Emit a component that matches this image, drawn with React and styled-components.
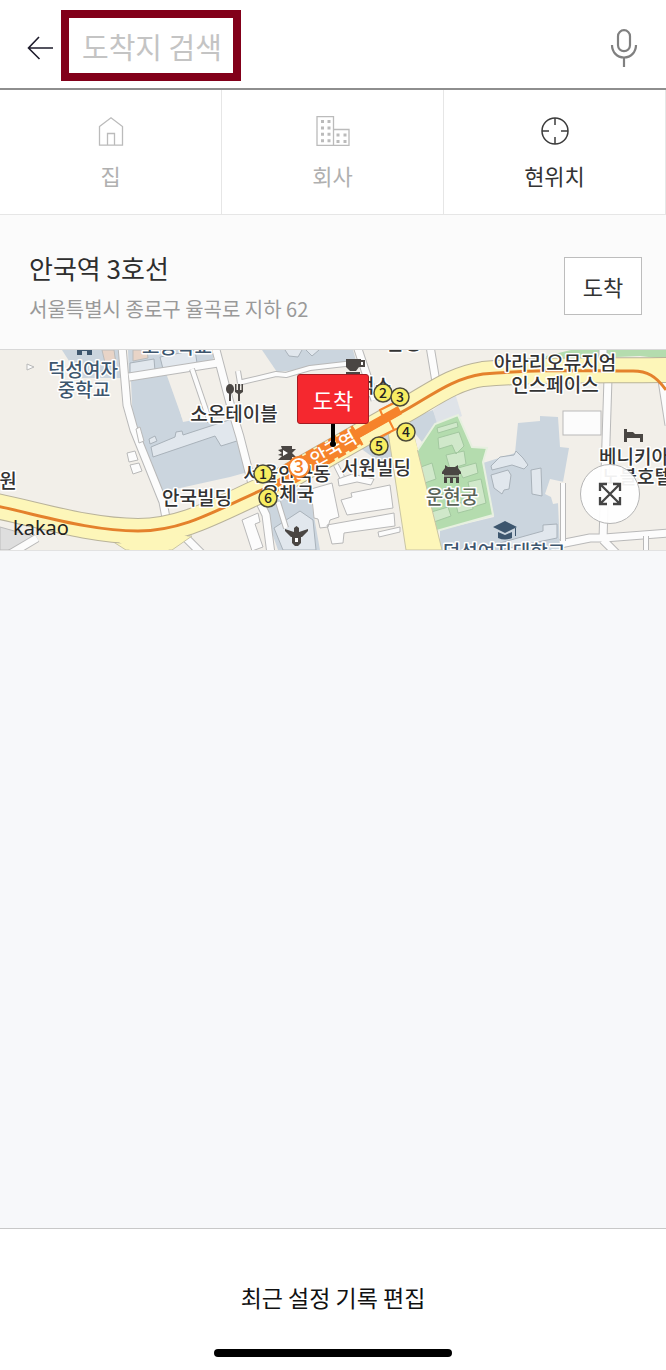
import React from "react";
import styled, { createGlobalStyle, css } from "styled-components";

const GlobalStyle = createGlobalStyle`
  * {
    box-sizing: border-box;
  }

  html,
  body,
  #root {
    height: 100%;
  }

  body {
    margin: 0;
    background: #f7f8fa;
    font-family: "Noto Sans CJK KR", sans-serif;
  }

  button,
  input {
    font-family: inherit;
    margin: 0;
    padding: 0;
  }
`;

const exits = [
  { no: 1, x: 263, y: 124 },
  { no: 6, x: 268, y: 148 },
  { no: 2, x: 383, y: 43 },
  { no: 3, x: 400, y: 47 },
  { no: 4, x: 406, y: 82 },
  { no: 5, x: 379, y: 96 },
];

const labels = [
  { text: "고등학교", x: 177, y: 4, tone: "school" },
  { text: "덕성여자", x: 83, y: 27, tone: "school" },
  { text: "중학교", x: 84, y: 47, tone: "school" },
  { text: "소온테이블", x: 234, y: 71 },
  { text: "원", x: 8, y: 138 },
  { text: "안국빌딩", x: 197, y: 155 },
  { text: "서울안국동", x: 287, y: 131 },
  { text: "우체국", x: 288, y: 151 },
  { text: "서원빌딩", x: 376, y: 125 },
  { text: "스타벅스", x: 357, y: 43 },
  { text: "은명", x: 404, y: 0 },
  { text: "운현궁", x: 452, y: 154, tone: "palace" },
  { text: "아라리오뮤지엄", x: 555, y: 20 },
  { text: "인스페이스", x: 555, y: 42 },
  { text: "베니키아", x: 634, y: 114 },
  { text: "노블호텔", x: 637, y: 134 },
  { text: "덕성여자대학교", x: 504, y: 209, tone: "school" },
];

const streets = [
  "M122 -4L127 55L134 80L163 152L166 168",
  "M129 27L205 15L218 13",
  "M215 -4L231 57L240 87L253 138",
  "M253 138L266 165L271 204",
  "M357 -4l18 54M430 -4l6 36M608 28l-3 95-2 67M603 190l14 14",
  "M37 188L10 204M186 188l16 16M603 -2v12",
  "M560 194l30-6 14 0 64-5",
  "M662 30l7 45",
];

const alleys =
  "M192 19l18 53M238 33l38-9 10 1 24-7 44-5M240 33l-2-12M563 133v58M646 186v14M278 152l8 26M336 115l6 12";

const BackIcon = () => (
  <svg width="28" height="24" viewBox="0 0 28 24" fill="none" stroke="#1d1b2b" strokeWidth="1.600">
    <path d="M27 12H3M13 1L2.500 12l11 11" />
  </svg>
);

const MicIcon = () => (
  <svg width="28" height="38" viewBox="0 0 28 38" fill="none" stroke="#808080" strokeWidth="2.200">
    <rect x="8" y="1.200" width="12" height="21" rx="6" />
    <path d="M2 16c0 7 5 12.500 12 12.500S26 23 26 16M14 28v10" />
  </svg>
);

const HomeIcon = () => (
  <svg width="26" height="30" viewBox="0 0 26 30" fill="none" stroke="#bbb" strokeWidth="1.300">
    <path d="M1.500 10.500L13 1.800l11.500 8.700v18.700h-23zM9.500 29V17.500h7V29" />
  </svg>
);

const OfficeIcon = () => (
  <svg width="34" height="30" viewBox="0 0 34 30">
    <path d="M1 0.700h16.500v28.600H1zM17.500 13.500H33v15.800H17.500z" fill="none" stroke="#bbb" strokeWidth="1.300" />
    <path
      d="M6.500 4v25M13 4v25M22 17.500v11M29 17.500v11"
      stroke="#bbb"
      strokeWidth="3"
      strokeDasharray="3 3.400"
    />
  </svg>
);

const TargetIcon = () => (
  <svg width="30" height="30" viewBox="0 0 30 30" fill="none" stroke="#3c3c3c" strokeWidth="1.500">
    <circle cx="15" cy="15" r="13" />
    <path d="M15 2v7M15 21v7M2 15h7M21 15h7" />
  </svg>
);

const ExpandIcon = () => (
  <svg width="24" height="24" viewBox="0 0 24 24" fill="none" stroke="#444" strokeWidth="2.300">
    <path d="M2 9V2h7M15 2h7v7M22 15v7h-7M9 22H2v-7M2 2l20 20M22 2L2 22" />
  </svg>
);

const StationMap = () => (
  <MapDrawing viewBox="0 0 666 200" preserveAspectRatio="xMidYMid slice" role="img" aria-label="안국역 지도">
    <rect width="666" height="200" fill="#f2efe9" />

    {/* blocks */}
    <g fill="#cbd5de">
      <path d="M62 0h56l5 28H80z" />
      <path d="M128 0h87l-3 13-83 13z" />
      <path d="M131 31l35-8 16 45 24-6 34 26 8 34-18 5-68 15-29-68z" />
      <path d="M262 0h91l4 14-80 8z" />
      <path d="M263 157l14-7 31-17 12 67h-42z" />
      <path d="M518 73l22-2v-5l18 1 2 30 9 1-6 34-5 21 2 47H440v-20l54-13-11-54 32-10z" />
      <path d="M405 71l28-11 7 18-18 14z" />
      <path d="M356 95l38-18 8 30-10 14z" />
    </g>
    <path d="M433 60l22-17 7 23-24 11z" fill="#dfe3e8" />
    <path d="M102 0h12l2 14-10 3zM133 0h14l1 8-15 3z" fill="#e8d4c7" stroke="#bbb" />
    <path d="M0 177l32 9-12 14H0z" fill="#dedede" stroke="#bbb" />
    <g fill="#e1e7ed" stroke="#a9b2ba">
      <path d="M130 13l24-4 1 12-25 5zM160 7l35-7 2 13-34 6z" />
      <path d="M151 97l24-10 1-5 6-1 1 4 49-16 8 21-19 6-6-10-62 21zM149 89l6-3 2 5-7 3z" />
      <path d="M274 178l26-17 13 9 3 30h-33z" />
      <path d="M285 0l4 6 9 1 4-7M306 0l6 6 7-6" />
      <path d="M491 116l9-9 14-2 2-4 7 7 5 7-4 4-12-4-20 5zM491 125l17-5 3 5-2 14-5 1-2 4-8-6zM531 120l10-2 1 28-10-2zM500 193l43-12v-6l14-1v14l-58 12z" />
    </g>
    <path d="M170 24l22-5 17 48-26 5z" fill="#f2efe9" />
    <path d="M550 129l14 3-5 21-6 1-2-7-6-3z" fill="#f2efe9" />

    {/* palace grounds */}
    <path d="M413 107l22-33 23-9 14 32 15 1-4 14 10 53-60 17z" fill="#b4dcae" stroke="#e7f0e0" strokeWidth="2" />
    <g fill="#d0e8ca" stroke="#a3c8a0">
      <path d="M437 78l20-6 1 5-20 6zM438 88l21-6 5 14-8 8-4-9-13 4zM418 118l14-5 4 16-14 5zM446 105l18-4 2 13-16 5zM458 118l18-5 2 10-15 5zM468 132l13-3 5 24-13 4zM428 163l20-6 3 9-20 7zM456 154l16-3 1 8-15 4z" />
    </g>
    <path d="M546 6l25-6h95v9l-26-3-95 4z" fill="#b4dcae" />

    {/* side streets */}
    <g fill="none" strokeLinejoin="round">
      {streets.map((d) => (
        <path d={d} key={d} stroke="#b9b9b9" strokeWidth="9" />
      ))}
      {streets.map((d) => (
        <path d={d} key={d} stroke="#fcfcfc" strokeWidth="7" />
      ))}
      <path d={alleys} stroke="#b9b9b9" strokeWidth="6" />
      <path d={alleys} stroke="#fcfcfc" strokeWidth="4" />
    </g>

    {/* buildings */}
    <g fill="#fcfcfc" stroke="#b9b9b9">
      <path d="M311 139l21-6 7 34-9 3-2 7-8 1-2-9-4-1zM341 150l11-3-1-4 39-8 3 23-46 7zM327 175l67-12 1 13-51 7-1 10-11 1zM378 182l22-5v5l-21 5z" />
      <path d="M242 170l16-7 2 9-5 2 8 23-11 4zM338 129l14-5 22 5-3 6-14-3-18 4z" />
      <path d="M127 103l8-2 3 9-9 2zM130 115l9-2 3 8-9 3zM136 79l4-2 4 14-5 2z" />
      <rect x="563" y="61" width="38" height="24" />
      <path d="M27 14l7 3-7 3z" />
    </g>

    {/* main roads */}
    <g fill="none" strokeLinecap="butt">
      <path d="M388 82l23-8 31 126h-36zM104 186l22 14h46l20-14z" fill="#fdf6b9" stroke="#c9c5a4" />
      <path
        d="M-4 156C40 165 90 181 138 181c47 0 80-22 139-48l123-70c30-16 50-34 83-39 60-5 120-3 186-4"
        stroke="#b9b39a"
        strokeWidth="26"
      />
      <path
        d="M-4 156C40 165 90 181 138 181c47 0 80-22 139-48l123-70c30-16 50-34 83-39 60-5 120-3 186-4"
        stroke="#fdf6b9"
        strokeWidth="24"
      />
      <path d="M390 80l20-8 8 28-22 5zM108 184l22 16h38l20-14z" fill="#fdf6b9" />
      <path
        d="M-4 156C40 165 90 181 138 181c47 0 80-22 139-48l123-70c30-16 50-34 83-39 60-5 100-3 150-3 14 0 23 5 33 19"
        stroke="#e4812c"
        strokeWidth="3"
      />
      <path d="M275 135L289 126" stroke="#f6832b" strokeWidth="7" />
      <path d="M350 88L400 60" stroke="#f6832b" strokeWidth="9" />
      <path d="M288 125L358 85" stroke="#f6832b" strokeWidth="22" strokeDasharray="9 4" />
      <path d="M288 125L358 85" stroke="#f6832b" strokeWidth="18" />
      <path
        d="M384 69l-4-9 16-8M388 68l6 12 8-3M394 80l-24 12M277 133l-7 3-3 8M283 136l-7 6"
        stroke="#f6832b"
        strokeWidth="2"
      />
    </g>

    {/* place icons */}
    <g fill="#4a4643">
      <path d="M346 9h15v1h4v7h-6l-3 4h-6l-4-4zM361 12v3h2v-3zM346 22h14v2h-14z" fillRule="evenodd" />
      <ellipse cx="230" cy="39" rx="4" ry="5" />
      <path d="M229 42h2v9h-2zM235 34h1.500v6h1.500v-6h2v6h1.500v-6h1.500v8l-3 2v7h-2v-7l-3-2z" />
      <path d="M281 96h11v3h4l-4 4 4 4h-4v3h-14l4-4-4-1 4-2-4-3 4-1z" />
      <path d="M294 178l2.500-2 2.500 2v4l9-3v2l-6 6h-1v6l-3 3h-3l-3-3v-6h-1l-6-6v-2l9 3z" />
      <path d="M445 115l3 2h7l3-2v3l3 4v2h-19v-2l3-4zM444 124h15v9h-3v-5h-3v5h-3v-5h-3v5h-3z" />
      <path d="M624 79h3v3h6l2 2h8v8h-3v-4h-13v4h-3z" />
    </g>
    <path d="M283 100l5 3-5 3M295 188h3v4h-3z" fill="#fff" />
    <path d="M443 126h17" stroke="#d0e8ca" />
    <g fill="#3d566e">
      <path d="M77 0h15v5h-5V1h-5v4h-5z" />
      <path d="M493 177l12-6 12 6-12 6zM498 182l7 3 7-3v6q-7 3-14 0zM515 178h1v8h-1z" />
    </g>

    {labels.map((label) => (
      <PlaceLabel key={label.text} x={label.x} y={label.y} $tone={label.tone}>
        {label.text}
      </PlaceLabel>
    ))}

    <circle cx="299" cy="117" r="10" fill="#fff" stroke="#f6832b" strokeWidth="2" />
    <LineNumber x="299" y="123">3</LineNumber>
    <StationName x="333" y="105" transform="rotate(-30 333 98)">
      안국역
    </StationName>

    {exits.map((exit) => (
      <g key={exit.no}>
        <circle cx={exit.x} cy={exit.y} r="9" fill="#f7ed62" stroke="#4b4a3a" strokeWidth="1.500" />
        <ExitNumber x={exit.x} y={exit.y + 5}>
          {exit.no}
        </ExitNumber>
      </g>
    ))}

    <Provider x="13" y="185">
      kakao
    </Provider>
  </MapDrawing>
);

const App = () => {
  return (
    <Page>
      <GlobalStyle />
      <Header>
        <IconButton aria-label="뒤로">
          <BackIcon />
        </IconButton>
        <SearchInput type="text" placeholder="도착지 검색" aria-label="도착지 검색" />
        <MicButton aria-label="음성 검색">
          <MicIcon />
        </MicButton>
      </Header>

      <Shortcuts>
        <Shortcut>
          <HomeIcon />
          집
        </Shortcut>
        <Shortcut>
          <OfficeIcon />
          회사
        </Shortcut>
        <Shortcut $active>
          <TargetIcon />
          현위치
        </Shortcut>
      </Shortcuts>

      <Place>
        <PlaceText>
          <PlaceName>안국역 3호선</PlaceName>
          <Address>서울특별시 종로구 율곡로 지하 62</Address>
        </PlaceText>
        <ArriveButton>도착</ArriveButton>
      </Place>

      <MapArea>
        <StationMap />
        <Pin>
          <PinLabel>도착</PinLabel>
          <PinStem />
        </Pin>
        <ExpandButton aria-label="지도 크게 보기">
          <ExpandIcon />
        </ExpandButton>
      </MapArea>

      <History />

      <Footer>
        <EditButton>최근 설정 기록 편집</EditButton>
        <HomeBar />
      </Footer>
    </Page>
  );
};

export default App;

const Page = styled.div`
  display: flex;
  flex-direction: column;
  min-height: 100%;
`;

const Header = styled.header`
  display: flex;
  align-items: center;
  padding: 10px 28px 7px 26px;
  background: #fff;
  border-bottom: 2px solid #8e8e8e;
`;

const IconButton = styled.button`
  display: flex;
  padding-top: 4px;
  border: none;
  background: none;
  cursor: pointer;
`;

const MicButton = styled(IconButton)`
  margin-left: auto;
`;

const SearchInput = styled.input`
  width: 180px;
  height: 71px;
  margin-left: 7px;
  padding: 0 0 0 13px;
  border: 8px solid #82001a;
  outline: none;
  background: #fff;
  color: #222;
  font-size: 29px;

  &::placeholder {
    color: #c4c4c4;
    opacity: 1;
  }
`;

const Shortcuts = styled.nav`
  display: grid;
  grid-template-columns: repeat(3, 1fr);
  background: #fff;
  border-bottom: 1px solid #e6e6e6;
`;

const Shortcut = styled.button`
  display: flex;
  flex-direction: column;
  align-items: center;
  justify-content: flex-end;
  height: 124px;
  padding-bottom: 23px;
  gap: 13px;
  border: none;
  border-right: 1px solid #e6e6e6;
  background: none;
  color: ${(props) => (props.$active ? "#333" : "#b0b0b0")};
  font-size: 22px;
  line-height: 32px;
  cursor: pointer;
`;

const Place = styled.section`
  display: flex;
  align-items: center;
  justify-content: space-between;
  padding: 33px 24px 25px 29px;
  background: #fbfbfb;
`;

const PlaceText = styled.div``;

const PlaceName = styled.h1`
  margin: 0 0 6px;
  color: #2e2e2e;
  font-size: 26px;
  font-weight: 400;
  line-height: 40px;
`;

const Address = styled.p`
  margin: 0;
  color: #999;
  font-size: 20px;
  line-height: 30px;
`;

const ArriveButton = styled.button`
  width: 78px;
  height: 58px;
  border: 1px solid #bdbdbd;
  background: #fff;
  color: #333;
  font-size: 22px;
  cursor: pointer;
`;

const MapArea = styled.div`
  position: relative;
  border-top: 1px solid #d8d8d8;
  border-bottom: 1px solid #e2e2e2;
`;

const MapDrawing = styled.svg`
  display: block;
  width: 100%;
  height: 200px;
`;

const labelColors = {
  school: "#3d566e",
  palace: "#5b6559",
};

const mapText = css`
  font-family: "Noto Sans CJK KR", sans-serif;
  text-anchor: middle;
`;

const PlaceLabel = styled.text`
  ${mapText}
  fill: ${(props) => labelColors[props.$tone] || "#333"};
  font-size: 19px;
  font-weight: 500;
  stroke: #fff;
  stroke-width: 3px;
  stroke-linejoin: round;
  paint-order: stroke;
`;

const LineNumber = styled.text`
  ${mapText}
  fill: #f6832b;
  font-size: 18px;
  font-weight: 500;
`;

const StationName = styled.text`
  ${mapText}
  fill: #fff;
  font-size: 18px;
  font-weight: 500;
`;

const ExitNumber = styled.text`
  ${mapText}
  fill: #222;
  font-size: 14px;
  font-weight: 500;
`;

const Provider = styled.text`
  fill: #222;
  font-family: "Noto Sans", sans-serif;
  font-size: 20px;
`;

const Pin = styled.div`
  position: absolute;
  top: 24px;
  left: 50%;
  display: flex;
  flex-direction: column;
  align-items: center;
  transform: translateX(-50%);
`;

const PinLabel = styled.div`
  width: 72px;
  border: 1px solid #a31c22;
  border-radius: 3px;
  background: #f5282f;
  color: #fff;
  font-size: 22px;
  line-height: 48px;
  text-align: center;
`;

const PinStem = styled.div`
  position: relative;
  width: 4px;
  height: 20px;
  background: #000;

  &::after {
    content: "";
    position: absolute;
    bottom: -3px;
    left: -1px;
    width: 6px;
    height: 6px;
    border-radius: 50%;
    background: #000;
  }
`;

const ExpandButton = styled.button`
  position: absolute;
  right: 26px;
  bottom: 26px;
  display: flex;
  align-items: center;
  justify-content: center;
  width: 60px;
  height: 60px;
  border: 1px solid #b5b5b5;
  border-radius: 50%;
  background: rgba(255, 255, 255, 0.93);
  cursor: pointer;
`;

const History = styled.main`
  flex: 1;
`;

const Footer = styled.footer`
  display: flex;
  flex-direction: column;
  align-items: center;
  padding: 48px 0 13px;
  background: #fff;
  border-top: 1px solid #c8c8c8;
`;

const EditButton = styled.button`
  margin-bottom: 32px;
  border: none;
  background: none;
  color: #111;
  font-size: 23px;
  line-height: 40px;
  cursor: pointer;
`;

const HomeBar = styled.div`
  width: 238px;
  height: 8px;
  border-radius: 4px;
  background: #000;
`;
